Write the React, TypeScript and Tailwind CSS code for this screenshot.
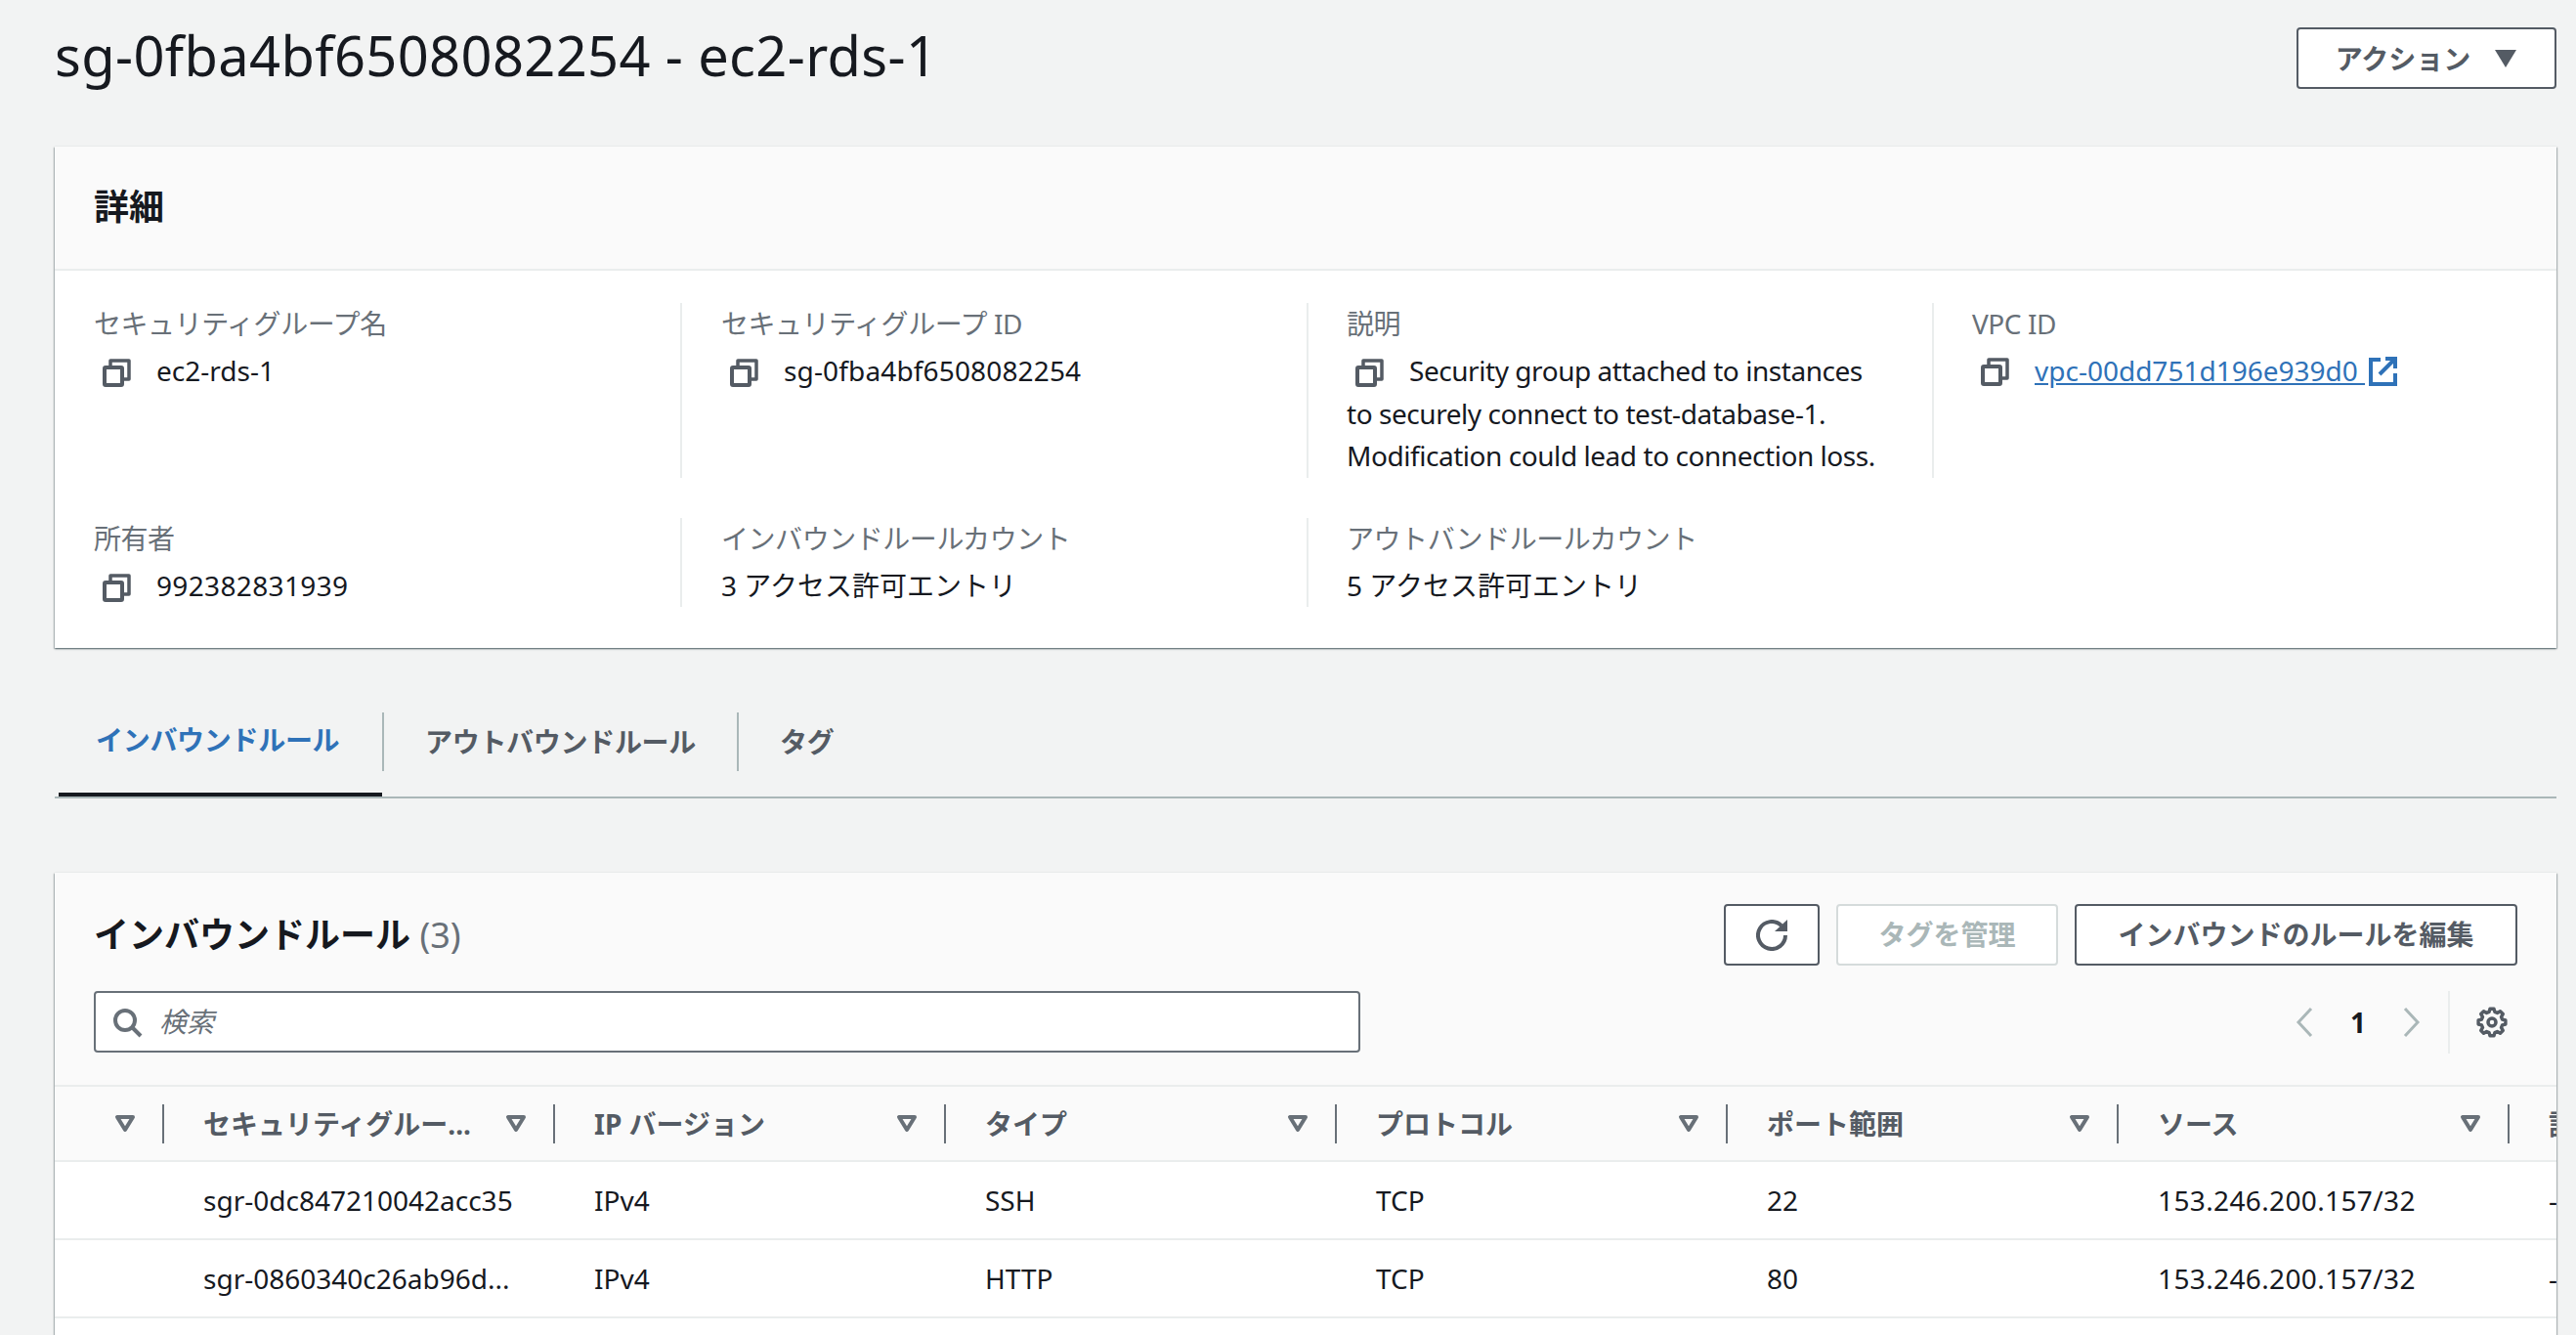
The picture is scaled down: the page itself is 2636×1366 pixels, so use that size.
const gearPath = (() => {
  const pts: string[] = [];
  const teeth = 8;
  for (let i = 0; i < teeth; i++) {
    const a = (i / teeth) * Math.PI * 2 - Math.PI / 2;
    const step = (Math.PI * 2) / teeth;
    const p = (r: number, t: number) =>
      `${(16 + r * Math.cos(t)).toFixed(2)} ${(16 + r * Math.sin(t)).toFixed(2)}`;
    pts.push(p(11, a - step * 0.34), p(14, a - step * 0.18), p(14, a + step * 0.18), p(11, a + step * 0.34));
  }
  return "M" + pts.join("L") + "Z";
})();

function CopyIcon() {
  return (
    <svg viewBox="0 0 32 32" className="inline-block w-8 h-8 ml-[7px] mr-[25px] align-[-7px] text-[#545b64]" fill="none" stroke="currentColor">
      <rect x="4" y="11" width="18" height="18" rx="1" strokeWidth="4" />
      <path d="M10 10V4h19v19h-6" strokeWidth="3.5" strokeLinejoin="round" />
    </svg>
  );
}

function ExternalIcon() {
  return (
    <svg viewBox="0 0 32 32" className="w-8 h-8 ml-[2px] shrink-0" fill="none" stroke="#2f72b8" strokeWidth="4">
      <path d="M14 4H4v25h25V18" />
      <path d="M19 3h10v10" />
      <path d="M28 4 13 19" />
    </svg>
  );
}

function FilterIcon() {
  return (
    <svg viewBox="0 0 32 32" className="w-8 h-8 shrink-0" fill="none" stroke="#687078" strokeWidth="4" strokeLinejoin="round">
      <path d="M8 9h16l-8 13z" />
    </svg>
  );
}

function Label({ children }: { children: React.ReactNode }) {
  return <div className="text-[28px] leading-[42px] tracking-[-0.45px] text-[#687078]">{children}</div>;
}

function Value({ children, className = "" }: { children: React.ReactNode; className?: string }) {
  return <div className={`mt-[6px] text-[28px] leading-[43.5px] text-[#16191f] ${className}`}>{children}</div>;
}

const headers = ["", "セキュリティグルー...", "IP バージョン", "タイプ", "プロトコル", "ポート範囲", "ソース", "説明"];

const rows = [
  ["", "sgr-0dc847210042acc35", "IPv4", "SSH", "TCP", "22", "153.246.200.157/32", "-"],
  ["", "sgr-0860340c26ab96d...", "IPv4", "HTTP", "TCP", "80", "153.246.200.157/32", "-"],
];

function cellWidth(i: number) {
  return i === 0 ? "w-[112px] shrink-0" : "w-[400px] shrink-0";
}

export default function App() {
  return (
    <div className="w-[2636px] h-screen overflow-hidden bg-[#f2f3f3] pl-[56px] pr-[20px] pt-[28px] font-['Noto_Sans','Noto_Sans_CJK_JP',sans-serif]">
      {/* タイトル */}
      <div className="flex items-center justify-between h-[63px]">
        <h1 className="text-[56px] leading-[63px] tracking-[0.37px] text-[#16191f] -mt-[7px]">sg-0fba4bf6508082254 - ec2-rds-1</h1>
        <button className="flex items-center gap-6 h-[63px] w-[266px] justify-center rounded-[4px] border-2 border-[#545b64] bg-white text-[28px] font-bold text-[#545b64]">
          アクション
          <svg viewBox="0 0 24 18" className="w-6 h-[18px]" fill="#545b64">
            <path d="M1 0h22L12 18z" />
          </svg>
        </button>
      </div>

      {/* 詳細 */}
      <div className="mt-[59px] bg-white shadow-[0_1px_2px_rgba(0,28,36,0.5),1px_1px_1px_rgba(0,28,36,0.15),-1px_1px_1px_rgba(0,28,36,0.15)]">
        <div className="h-[127px] flex items-center px-10 bg-[#fafafa] border-b-2 border-[#eaeded]">
          <h2 className="text-[36px] font-bold text-[#16191f] -mt-[2px]">詳細</h2>
        </div>
        <div className="grid grid-cols-[600px_641px_640px_1fr] gap-y-[41px] pl-10 pt-[33px] pb-[42px]">
          <div>
            <Label>セキュリティグループ名</Label>
            <Value><CopyIcon />ec2-rds-1</Value>
          </div>
          <div className="border-l-2 border-[#eaeded] pl-[40px]">
            <Label>セキュリティグループ ID</Label>
            <Value className="tracking-[0.15px]"><CopyIcon />sg-0fba4bf6508082254</Value>
          </div>
          <div className="border-l-2 border-[#eaeded] pl-[39px] pr-[50px]">
            <Label>説明</Label>
            <Value className="tracking-[-0.45px]"><CopyIcon />Security group attached to instances to securely connect to test-database-1. Modification could lead to connection loss.</Value>
          </div>
          <div className="border-l-2 border-[#eaeded] pl-[39px]">
            <Label>VPC ID</Label>
            <div className="mt-[6px] flex items-center text-[28px] leading-[43.5px]">
              <CopyIcon />
              <a className="text-[#2f72b8] underline underline-offset-2">vpc-00dd751d196e939d0&nbsp;</a>
              <ExternalIcon />
            </div>
          </div>
          <div>
            <Label>所有者</Label>
            <Value className="tracking-[0.35px]"><CopyIcon />992382831939</Value>
          </div>
          <div className="border-l-2 border-[#eaeded] pl-[40px]">
            <Label>インバウンドルールカウント</Label>
            <Value>3 アクセス許可エントリ</Value>
          </div>
          <div className="border-l-2 border-[#eaeded] pl-[39px]">
            <Label>アウトバンドルールカウント</Label>
            <Value>5 アクセス許可エントリ</Value>
          </div>
        </div>
      </div>

      {/* タブ */}
      <div className="mt-[42px] flex items-center h-[112px] border-b-2 border-[#aab7b8] pl-1 text-[28px] font-bold text-[#545b64] tracking-[-0.3px]">
        <div className="w-[331px] h-full flex items-center pl-[38px] pb-[2px] border-b-4 border-[#16191f] text-[#2f72b8]">インバウンドルール</div>
        <span className="w-[2px] h-[60px] bg-[#aab7b8] shrink-0 -mt-[2px]" />
        <div className="px-[42px] pb-[2px]">アウトバウンドルール</div>
        <span className="w-[2px] h-[60px] bg-[#aab7b8] shrink-0 -mt-[2px]" />
        <div className="px-[42px] pb-[2px]">タグ</div>
      </div>

      {/* インバウンドルール */}
      <div className="mt-[76px] bg-white shadow-[0_1px_2px_rgba(0,28,36,0.5),1px_1px_1px_rgba(0,28,36,0.15),-1px_1px_1px_rgba(0,28,36,0.15)]">
        <div className="bg-[#fafafa] pl-10 pr-10 pt-[32px] pb-[33px]">
          <div className="flex items-center justify-between h-[63px]">
            <h2 className="text-[36px] font-bold text-[#16191f]">
              インバウンドルール <span className="font-normal text-[#687078]">(3)</span>
            </h2>
            <div className="flex gap-[17px] text-[28px] font-bold">
              <button className="w-[98px] h-[63px] flex items-center justify-center rounded-[4px] border-2 border-[#545b64] bg-white">
                <svg viewBox="0 0 32 32" className="w-8 h-8" fill="none" stroke="#545b64" strokeWidth="4">
                  <path d="M25.9 6.1A14 14 0 1 0 30 16" />
                  <path d="M19 12h13V0z" fill="#545b64" stroke="none" />
                </svg>
              </button>
              <button className="w-[227px] h-[63px] pb-[2px] rounded-[4px] border-2 border-[#d5dbdb] bg-white text-[#aab7b8]">タグを管理</button>
              <button className="w-[453px] h-[63px] pb-[2px] rounded-[4px] border-2 border-[#545b64] bg-white text-[#545b64]">インバウンドのルールを編集</button>
            </div>
          </div>
          <div className="mt-[26px] flex items-center justify-between h-[63px]">
            <div className="w-[1296px] h-[63px] flex items-center gap-[17px] pl-[16px] rounded-[4px] border-2 border-[#687078] bg-white">
              <svg viewBox="0 0 32 32" className="w-8 h-8" fill="none" stroke="#687078" strokeWidth="4">
                <circle cx="14" cy="14" r="10" />
                <path d="m21 21 9 9" />
              </svg>
              <span className="text-[28px] italic text-[#687078] pb-[2px]">検索</span>
            </div>
            <div className="flex items-center mr-[10px]">
              <svg viewBox="0 0 18 32" className="w-[18px] h-8" fill="none" stroke="#aab7b8" strokeWidth="3">
                <path d="M16 2 3 16l13 14" />
              </svg>
              <span className="w-[92px] text-center text-[28px] font-bold text-[#16191f]">1</span>
              <svg viewBox="0 0 18 32" className="w-[18px] h-8" fill="none" stroke="#aab7b8" strokeWidth="3">
                <path d="m2 2 13 14L2 30" />
              </svg>
              <span className="ml-[28px] w-[2px] h-16 bg-[#eaeded]" />
              <svg viewBox="0 0 32 32" className="ml-[27px] w-8 h-8" fill="none" stroke="#545b64" strokeWidth="3.5" strokeLinejoin="round">
                <path d={gearPath} />
                <circle cx="16" cy="16" r="4" />
              </svg>
            </div>
          </div>
        </div>

        <div className="overflow-hidden">
          <div className="flex h-[79px] items-center bg-[#fafafa] border-y-2 border-[#eaeded] text-[28px] font-bold text-[#545b64]">
            {headers.map((h, i) => (
              <div key={i} className={`${cellWidth(i)} h-10 flex items-center justify-between ${i === 0 ? "pl-[56px]" : "pl-10"} pr-[22px] border-r-2 border-[#687078] whitespace-nowrap`}>
                <span>{h}</span>
                <FilterIcon />
              </div>
            ))}
          </div>
          {rows.map((row, r) => (
            <div key={r} className="flex h-[80px] items-center border-b-2 border-[#eaeded] text-[28px] text-[#16191f]">
              {row.map((c, i) => (
                <div key={i} className={`${cellWidth(i)} pl-10 whitespace-nowrap ${i === 6 ? "tracking-[0.37px]" : ""}`}>{c}</div>
              ))}
            </div>
          ))}
          <div className="h-[80px]" />
        </div>
      </div>
    </div>
  );
}
